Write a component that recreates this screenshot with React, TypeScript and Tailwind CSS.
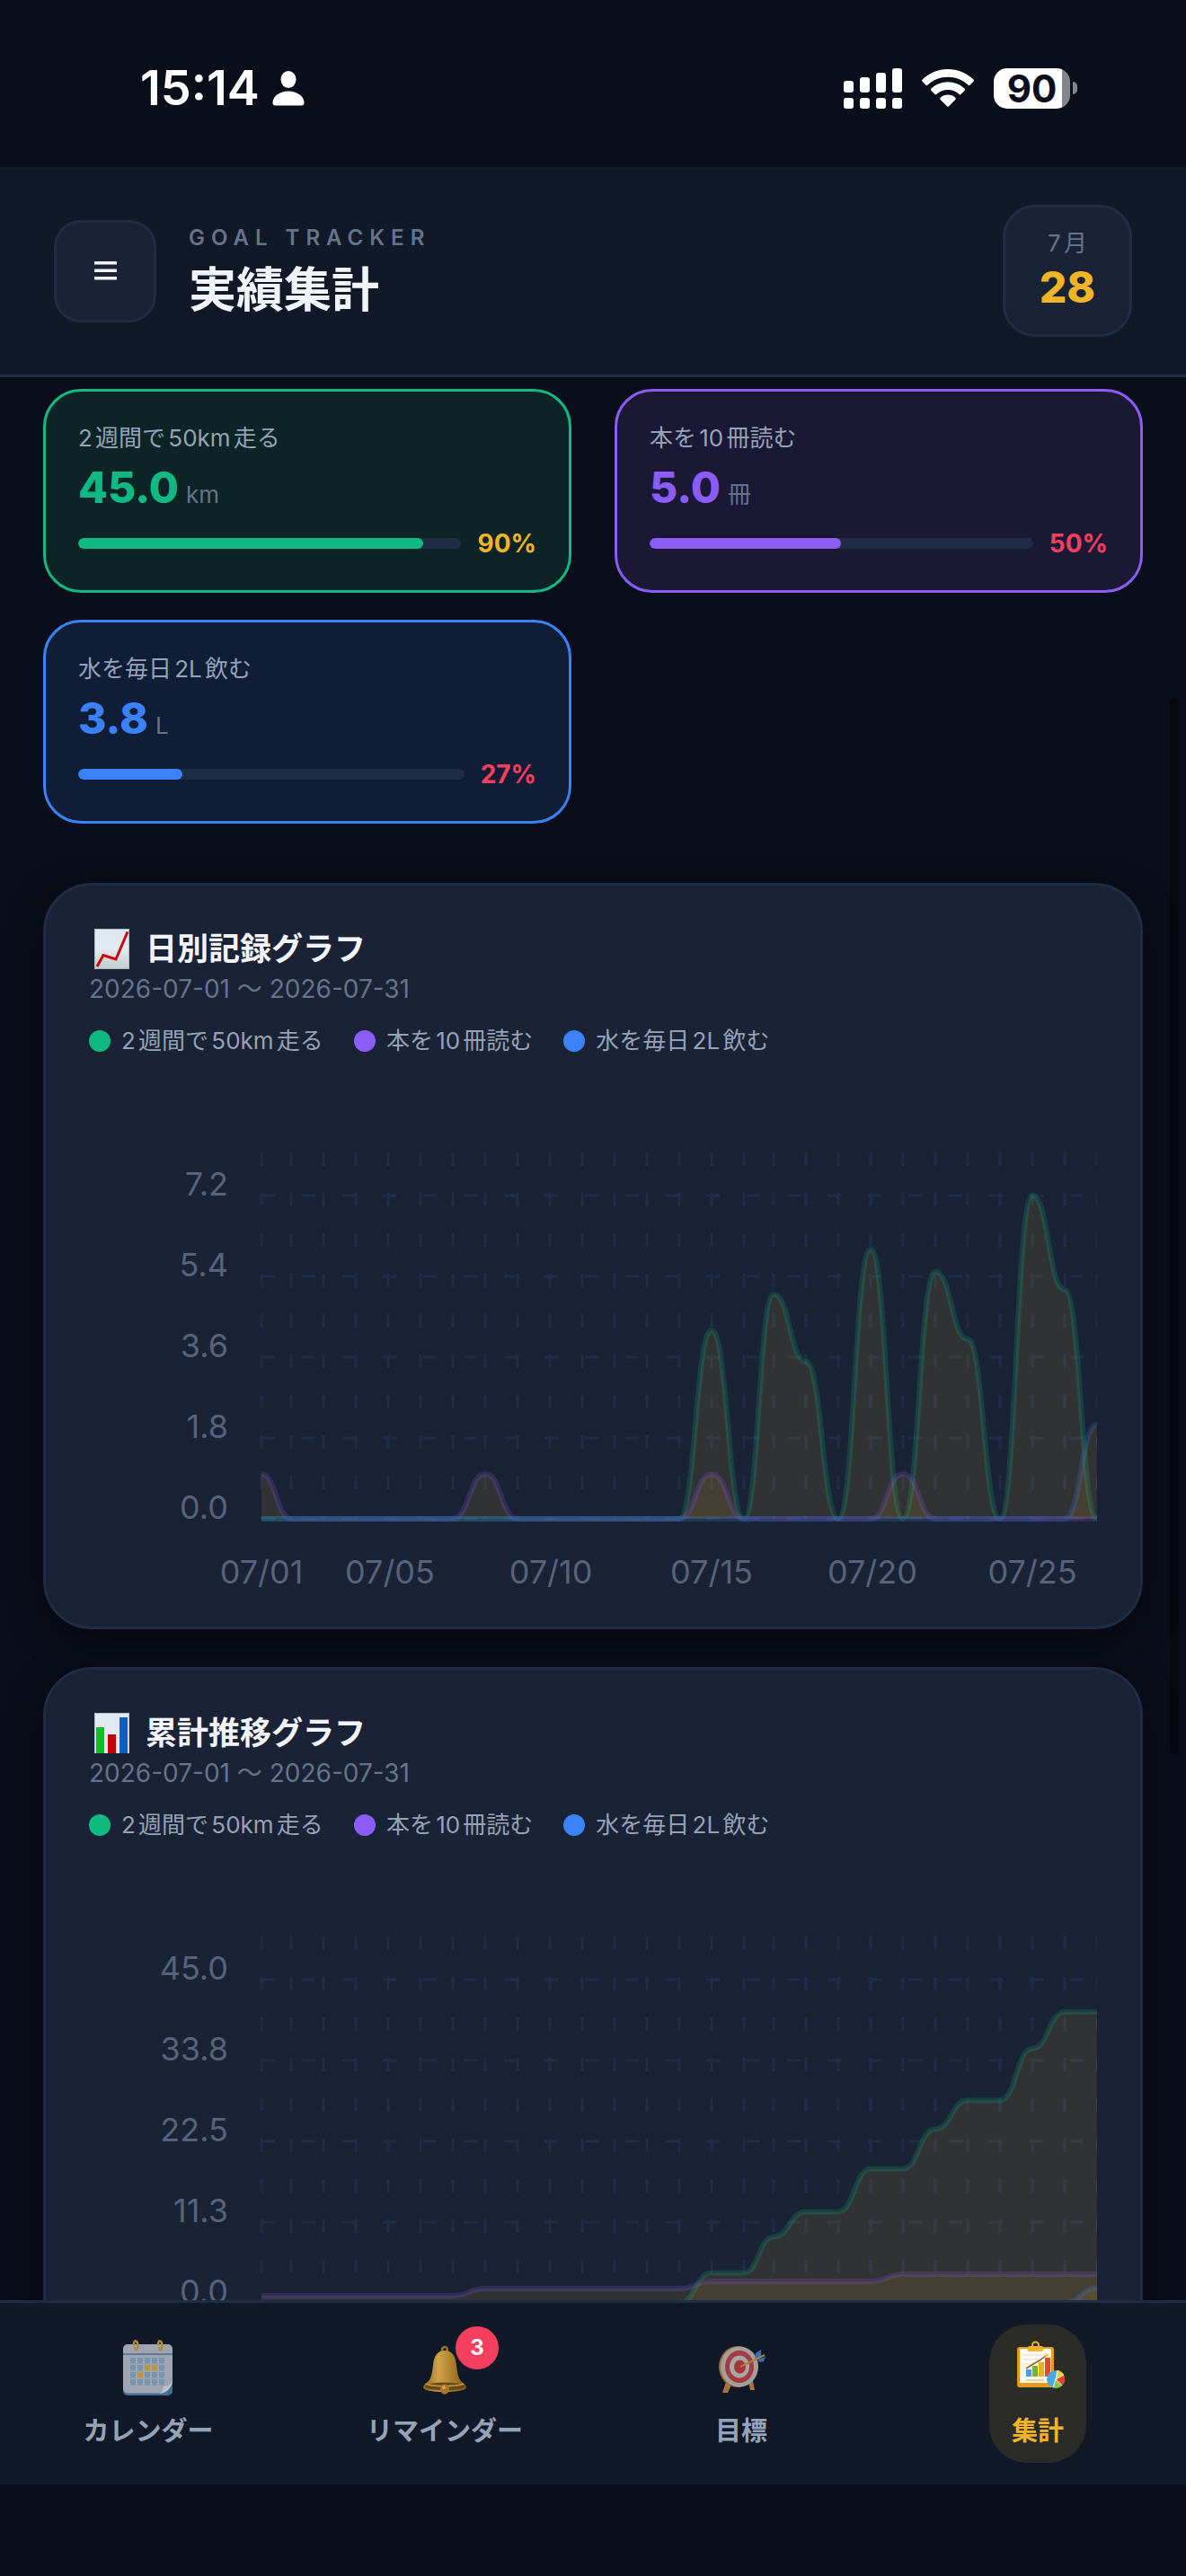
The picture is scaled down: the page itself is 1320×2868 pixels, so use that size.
import { ReactNode, useState } from "react";
import clsx from "clsx";

type Goal = {
  id: string;
  name: string;
  value: string;
  unit: string;
  percent: number;
  color: string;
  cardClass: string;
  valueClass: string;
  barClass: string;
  percentClass: string;
  /** 日別の記録（1日〜27日） */
  daily: number[];
};

const GOALS: Goal[] = [
  {
    id: "run",
    name: "2週間で50km走る",
    value: "45.0",
    unit: "km",
    percent: 90,
    color: "#10b981",
    cardClass: "border-[#10b981] bg-[#0d2427]",
    valueClass: "text-[#10b981]",
    barClass: "bg-[#10b981]",
    percentClass: "text-[#f0b429]",
    daily: [
      0, 0, 0, 0, 0, 0, 0, 0, 0, 0, 0, 0, 0, 0, 4.2, 0, 5, 3.5, 0, 6, 0, 5.5, 4,
      0, 7.2, 5.1, 0,
    ],
  },
  {
    id: "read",
    name: "本を10冊読む",
    value: "5.0",
    unit: "冊",
    percent: 50,
    color: "#8b5cf6",
    cardClass: "border-[#8b5cf6] bg-[#1b1835]",
    valueClass: "text-[#8b5cf6]",
    barClass: "bg-[#8b5cf6]",
    percentClass: "text-[#f43f5e]",
    daily: [
      1, 0, 0, 0, 0, 0, 0, 1, 0, 0, 0, 0, 0, 0, 1, 0, 0, 0, 0, 0, 1, 0, 0, 0, 0,
      0, 0,
    ],
  },
  {
    id: "water",
    name: "水を毎日2L飲む",
    value: "3.8",
    unit: "L",
    percent: 27,
    color: "#3b82f6",
    cardClass: "border-[#3b82f6] bg-[#0f1d36]",
    valueClass: "text-[#3b82f6]",
    barClass: "bg-[#3b82f6]",
    percentClass: "text-[#f43f5e]",
    daily: [
      0, 0, 0, 0, 0, 0, 0, 0, 0, 0, 0, 0, 0, 0, 0, 0, 0, 0, 0, 0, 0, 0, 0, 0, 0,
      0, 2.1,
    ],
  },
];

const PERIOD = "2026-07-01 〜 2026-07-31";

/** 累計に変換 */
const accumulate = (values: number[]) => {
  let sum = 0;
  return values.map((value) => (sum += value));
};

// グラフの座標
const CHART_WIDTH = 1122;
const CHART_HEIGHT = 564;
const PLOT_LEFT = 192;
const PLOT_TOP = 72;
const PLOT_BOTTOM = 480;
const ROW_HEIGHT = 90;
const DAYS = 27;
const LABEL_DAYS = [1, 5, 10, 15, 20, 25];

/** 日付のx座標（グリッドに合わせて3px単位に丸める） */
const dayX = (index: number) => Math.floor(64.06 + index * 11.93) * 3;

/** ラベルは丸めずに等間隔で置く */
const labelX = (index: number) =>
  Math.round(PLOT_LEFT + (index * (CHART_WIDTH - PLOT_LEFT)) / (DAYS - 1));

const linePath = (values: number[], max: number) => {
  const toY = (value: number) => PLOT_BOTTOM - (value / max) * ROW_HEIGHT * 4;
  return values.reduce((path, value, i) => {
    const x = dayX(i);
    const y = toY(value);
    if (i === 0) return `M${x} ${y}`;
    const middle = (dayX(i - 1) + x) / 2;
    return `${path} C${middle} ${toY(values[i - 1])} ${middle} ${y} ${x} ${y}`;
  }, "");
};

type TrendChartProps = {
  id: string;
  label: string;
  max: number;
  ticks: string[];
  series: { color: string; values: number[] }[];
};

function TrendChart({ id, label, max, ticks, series }: TrendChartProps) {
  const clipId = `plot-${id}`;

  return (
    <svg
      viewBox={`0 0 ${CHART_WIDTH} ${CHART_HEIGHT}`}
      className="mt-9 block w-full"
      role="img"
      aria-label={label}
    >
      <clipPath id={clipId}>
        <rect x={PLOT_LEFT} y="0" width={CHART_WIDTH} height="490" />
      </clipPath>

      {/* グリッド */}
      <g stroke="#1e2d4a" strokeWidth="3" strokeDasharray="15 30">
        {Array.from({ length: DAYS }, (_, i) => (
          <line
            key={i}
            x1={dayX(i)}
            x2={dayX(i)}
            y1={PLOT_TOP}
            y2={PLOT_BOTTOM}
          />
        ))}
        {ticks.map((tick, i) => (
          <line
            key={tick}
            x1={PLOT_LEFT}
            x2={CHART_WIDTH}
            y1={PLOT_BOTTOM - (4 - i) * ROW_HEIGHT}
            y2={PLOT_BOTTOM - (4 - i) * ROW_HEIGHT}
          />
        ))}
      </g>

      {/* 折れ線と塗り */}
      <g clipPath={`url(#${clipId})`}>
        {series.map(({ color, values }) => {
          const path = linePath(values, max);
          return (
            <g key={color}>
              <path
                d={`${path} V${PLOT_BOTTOM} H${PLOT_LEFT} Z`}
                fill="#f0b429"
                fillOpacity="0.11"
              />
              <path
                d={path}
                fill="none"
                stroke={color}
                strokeOpacity="0.2"
                strokeWidth="6"
              />
            </g>
          );
        })}
      </g>

      {/* 目盛り */}
      <g fill="#55637b" fontSize="36">
        {ticks.map((tick, i) => (
          <text
            key={tick}
            x="155"
            y={PLOT_BOTTOM - (4 - i) * ROW_HEIGHT}
            textAnchor="end"
          >
            {tick}
          </text>
        ))}
        {LABEL_DAYS.map((day) => (
          <text key={day} x={labelX(day - 1)} y="552" textAnchor="middle">
            {`07/${String(day).padStart(2, "0")}`}
          </text>
        ))}
      </g>
    </svg>
  );
}

type ChartCardProps = {
  icon: ReactNode;
  title: string;
  children: ReactNode;
};

function ChartCard({ icon, title, children }: ChartCardProps) {
  return (
    <section className="rounded-[54px] border-3 border-[#1e2d45] bg-[#1a2235] px-12 pt-12 pb-9 shadow-[0_12px_36px_rgba(0,0,0,0.5)]">
      <div className="flex items-center gap-4 pl-1.5">
        {icon}
        <h2 className="text-[35px] leading-[45px] font-bold text-slate-100">
          {title}
        </h2>
      </div>
      <p className="mt-1.5 text-[28px] leading-8 text-[#64748b]">{PERIOD}</p>
      <ul className="mt-[26px] flex flex-wrap gap-x-[34px]">
        {GOALS.map((goal) => (
          <li key={goal.id} className="flex items-center gap-3">
            <span className={clsx("size-6 rounded-full", goal.barClass)} />
            <span className="text-[26px] leading-8 text-[#94a3b8]">
              {goal.name}
            </span>
          </li>
        ))}
      </ul>
      {children}
    </section>
  );
}

function GoalCard({ goal }: { goal: Goal }) {
  return (
    <article className={clsx("rounded-[42px] border-3 p-9", goal.cardClass)}>
      <h2 className="text-[26px] leading-8 text-[#94a3b8]">{goal.name}</h2>
      <p className="mt-2.5 flex items-baseline gap-2">
        <span
          className={clsx("text-5xl/[57px] font-extrabold", goal.valueClass)}
        >
          {goal.value}
        </span>
        <span className="text-[26px] leading-8 text-[#64748b]">
          {goal.unit}
        </span>
      </p>
      <div className="mt-[18px] flex items-center gap-[18px]">
        <div className="h-3 flex-1 overflow-hidden rounded-full bg-[#1e2d45]">
          <div
            className={clsx("h-full rounded-full", goal.barClass)}
            style={{ width: `${goal.percent}%` }}
          />
        </div>
        <span
          className={clsx("text-[28px] leading-8 font-bold", goal.percentClass)}
        >
          {goal.percent}%
        </span>
      </div>
    </article>
  );
}

function StatusBar() {
  return (
    <div className="flex h-[186px] shrink-0 items-center justify-between pt-2.5 pr-[121px] pl-[156px] text-white">
      <div className="flex items-center gap-3.5">
        <span className="text-[54px] leading-[60px] font-semibold">15:14</span>
        <svg width="36" height="39" viewBox="0 0 36 39" fill="currentColor">
          <ellipse cx="18" cy="9.5" rx="8.5" ry="9.5" />
          <path d="M18 22.5c9.5 0 17.5 5.500 17.5 13 0 2-1 3-3 3h-29c-2 0-3-1-3-3 0-7.500 8-13 17.500-13z" />
        </svg>
      </div>
      <div className="flex items-center gap-[22px]">
        <svg width="65" height="45" viewBox="0 0 65 45" fill="currentColor">
          <rect x="0" y="14" width="11" height="13" rx="3" />
          <rect x="18" y="10" width="11" height="17" rx="3" />
          <rect x="36" y="5" width="11" height="22" rx="3" />
          <rect x="54" y="0" width="11" height="27" rx="3" />
          <rect x="0" y="33" width="11" height="12" rx="3" />
          <rect x="18" y="33" width="11" height="12" rx="3" />
          <rect x="36" y="33" width="11" height="12" rx="3" />
          <rect x="54" y="33" width="11" height="12" rx="3" />
        </svg>
        <svg width="58" height="42" viewBox="0 0 58 42" fill="currentColor">
          <path d="M29 0C18 0 8 4.300.6 11.500c-.8.8-.8 1.500 0 2.300l3.700 3.800c.8.8 1.500.8 2.300 0C12.600 12 20.400 8.800 29 8.800S45.400 12 51.400 17.600c.8.8 1.500.8 2.300 0l3.700-3.800c.8-.8.8-1.500 0-2.300C50 4.300 40 0 29 0z" />
          <path d="M29 14.200c-7.200 0-13.700 2.800-18.500 7.400-.8.800-.8 1.500 0 2.300l3.800 3.900c.8.800 1.500.8 2.300 0 3.300-3 7.600-4.900 12.400-4.900s9.100 1.900 12.400 4.900c.8.800 1.500.8 2.300 0l3.800-3.900c.8-.8.8-1.500 0-2.300-4.800-4.600-11.300-7.400-18.500-7.400z" />
          <path d="M29 28.500c-3.200 0-6.100 1.200-8.200 3.200-.8.8-.8 1.400 0 2.200l7.100 7.300c.8.800 1.400.8 2.200 0l7.100-7.300c.8-.8.8-1.400 0-2.200-2.100-2-5-3.200-8.200-3.200z" />
        </svg>
        <div className="flex items-center gap-[3px]">
          <span className="flex h-[45px] w-[85px] items-center justify-center rounded-[15px] bg-linear-to-r from-white from-90% to-[#85868c] to-90% text-[42px] leading-[45px] font-bold text-[#0a0e1a]">
            90
          </span>
          <span className="h-3.5 w-[5px] rounded-r-full bg-[#85868c]" />
        </div>
      </div>
    </div>
  );
}

function ChartUpIcon() {
  return (
    <svg className="mr-0.5 shrink-0" width="39" height="45" viewBox="0 0 39 45">
      <defs>
        <linearGradient id="paper" x1="0" y1="0" x2="0" y2="1">
          <stop offset="0" stopColor="#dbe7f0" />
          <stop offset="0.5" stopColor="#e3ebf1" />
          <stop offset="1" stopColor="#c3cad0" />
        </linearGradient>
      </defs>
      <rect width="39" height="45" fill="#aeb8c2" />
      <rect x="1" y="1" width="37" height="43" fill="url(#paper)" />
      <path
        d="M3 42 10 29.5 24 34 37 3.5"
        fill="none"
        stroke="#c8070b"
        strokeWidth="3"
      />
    </svg>
  );
}

function BarChartIcon() {
  return (
    <svg className="mr-0.5 shrink-0" width="39" height="45" viewBox="0 0 39 45">
      <rect width="39" height="45" fill="#b4bec8" />
      <rect x="1" y="1" width="37" height="44" fill="#e1eaf2" />
      <rect x="2" y="16" width="9" height="29" fill="#08c41c" />
      <rect x="15" y="24" width="9" height="21" fill="#c40508" />
      <rect x="28" y="5" width="9" height="40" fill="#0a5fcb" />
    </svg>
  );
}

function CalendarIcon() {
  return (
    <svg width="60" height="62" viewBox="-2 0 60 62">
      <rect x="0" y="8" width="55" height="54" rx="5" fill="#436f99" />
      <path
        d="M5 5h45a5 5 0 0 1 5 5v36c-2 9-7 13-14 13.500H5a5 5 0 0 1-5-5V10a5 5 0 0 1 5-5z"
        fill="#a0a4b0"
      />
      <path d="M0 16h55" stroke="#4a6f93" strokeWidth="1.500" />
      {[0, 1, 2, 3].map((row) =>
        [0, 1, 2, 3, 4].map((col) => {
          const marked =
            (row === 1 && (col === 2 || col === 3)) || (row === 2 && col === 1);
          return (
            <rect
              key={`${row}-${col}`}
              x={8 + col * 8}
              y={20 + row * 8}
              width="6"
              height="6.500"
              fill={marked ? "#b8943c" : "#7795ae"}
            />
          );
        }),
      )}
      <path
        d="M55 45c-1 9-6 14-15 15 4-2 5-6 5-8 4 0 8-2 10-7z"
        fill="#c0c3c9"
      />
      <g fill="none" stroke="#b08b38" strokeWidth="2.500" strokeLinecap="round">
        <path d="M12 5c0-5 4-5 4.500 1 0 6-3 7-3 3" />
        <path d="M39 5c0-5 4-5 4.500 1 0 6-3 7-3 3" />
      </g>
    </svg>
  );
}

function BellIcon() {
  return (
    <svg width="60" height="60" viewBox="-6 -6 60 60">
      <defs>
        <linearGradient id="bell" x1="0" y1="0" x2="1" y2="0">
          <stop offset="0" stopColor="#8a6524" />
          <stop offset="0.35" stopColor="#cfa348" />
          <stop offset="0.6" stopColor="#b58831" />
          <stop offset="1" stopColor="#7c5718" />
        </linearGradient>
      </defs>
      <circle cx="24" cy="4" r="3" fill="none" stroke="#9b7128" strokeWidth="2.500" />
      <path
        d="M24 5c8 0 12 6 13 16 1 9 2 15 6 19 3 2 5 4 5 6 0 3-10 5-24 5S0 49 0 46c0-2 2-4 5-6 4-4 5-10 6-19C12 11 16 5 24 5z"
        fill="url(#bell)"
      />
      <ellipse cx="24" cy="45" rx="22" ry="4.500" fill="#6b4a17" />
      <path
        d="M3 42c9 3.500 33 3.500 42 0"
        fill="none"
        stroke="#c99a3c"
        strokeWidth="1.500"
      />
      <ellipse cx="24" cy="48" rx="5" ry="5.500" fill="#a87926" />
      <ellipse cx="23" cy="46" rx="2" ry="2" fill="#d0a752" />
    </svg>
  );
}

function TargetIcon() {
  return (
    <svg width="60" height="60" viewBox="-5 -6 60 60">
      <path d="M8 40 4 52h6l4-9zM33 40l2 9h5l-2-10z" fill="#a87240" />
      <ellipse cx="21" cy="23" rx="21" ry="23" fill="#96693a" />
      <ellipse cx="23" cy="23" rx="21" ry="22.500" fill="#a3a09c" />
      <ellipse cx="23" cy="23" rx="16" ry="18" fill="#a33c42" />
      <ellipse cx="23" cy="23" rx="11" ry="12.500" fill="#aaa7a4" />
      <ellipse cx="23.500" cy="23" rx="6.500" ry="7.500" fill="#a3363c" />
      <path d="m40 14 1-6 6-4v8zM43 15l9-3-2 5-5 1z" fill="#3f6cab" />
      <path d="M24 23 51 10" stroke="#a8803d" strokeWidth="2" />
    </svg>
  );
}

function ReportIcon() {
  return (
    <svg width="60" height="60" viewBox="-7 -1 60 60">
      <circle cx="20.500" cy="4" r="3.500" fill="none" stroke="#f2b62c" strokeWidth="2" />
      <rect x="0" y="6" width="41" height="45" rx="3" fill="#e39a1a" />
      <rect x="3" y="8" width="35" height="38" rx="1" fill="#fffaf0" />
      <rect x="12" y="5" width="17" height="6" rx="1.500" fill="#f4b52c" />
      <path d="M7 15h22M7 20h18M7 25h12" stroke="#d8dde2" />
      <rect x="10" y="31" width="6" height="8" fill="#3fa2e8" />
      <rect x="17" y="27" width="6" height="12" fill="#74b62e" />
      <rect x="24" y="23" width="6" height="16" fill="#f0ad1c" />
      <rect x="31" y="18" width="6" height="21" fill="#df4a2b" />
      <path d="m10 30 8-5 7-4 8-6" fill="none" stroke="#8c6418" strokeWidth="1.500" />
      <circle cx="33" cy="15" r="2" fill="#ffcf3f" />
      <path d="M10 43h20" stroke="#f3c66a" strokeWidth="1.500" />
      <circle cx="43" cy="42" r="10" fill="#45a7ec" />
      <path d="m43 42 2-10a10 10 0 0 1 7 5z" fill="#f5cf2f" />
      <path d="m43 42 9-5a10 10 0 0 1-2 12z" fill="#e2452c" />
      <path d="m43 42 7 7a10 10 0 0 1-10 2z" fill="#8cc63c" />
      <path d="m43 42 2-10M43 42l9-5M43 42l7 7M43 42l-3 9" stroke="#fff" />
    </svg>
  );
}

const NAV_ITEMS = [
  { id: "calendar", label: "カレンダー", icon: <CalendarIcon /> },
  { id: "reminder", label: "リマインダー", icon: <BellIcon />, badge: 3 },
  { id: "goal", label: "目標", icon: <TargetIcon /> },
  { id: "stats", label: "集計", icon: <ReportIcon /> },
];

export default function App() {
  const [activeTab, setActiveTab] = useState("stats");

  return (
    <div
      lang="ja"
      className="flex h-screen flex-col bg-[#0a0e1a] font-['Inter','Noto_Sans_CJK_JP',sans-serif] [text-autospace:normal]"
    >
      <StatusBar />

      {/* ヘッダー */}
      <header className="flex shrink-0 items-center border-b-3 border-[#1e2d45] bg-[#111827] px-[60px] py-[42px]">
        <button
          type="button"
          aria-label="メニュー"
          className="flex size-[114px] items-center justify-center rounded-[30px] border-3 border-[#1e2d45] bg-[#1a2235]"
        >
          <svg width="25" height="21" viewBox="0 0 25 21" fill="#f1f5f9">
            <rect y="0" width="25" height="3.500" />
            <rect y="8.500" width="25" height="3.500" />
            <rect y="17" width="25" height="3.500" />
          </svg>
        </button>
        <div className="ml-9">
          <p className="text-2xl/8 font-semibold tracking-[7px] text-[#64748b]">
            GOAL TRACKER
          </p>
          <h1 className="mt-2.5 text-[53px] leading-[64px] font-bold text-slate-100">
            実績集計
          </h1>
        </div>
        <div className="ml-auto flex w-36 flex-col items-center gap-1 rounded-[36px] border-3 border-[#1e2d45] bg-[#1a2235] py-6">
          <span className="text-[26px] leading-8 text-[#64748b]">7月</span>
          <span className="text-5xl/[57px] font-extrabold text-[#f0b429]">
            28
          </span>
        </div>
      </header>

      <div className="relative min-h-0 flex-1">
        <main className="h-full overflow-y-auto px-12 pt-[13px] pb-12 [scrollbar-width:none]">
          {/* 目標ごとの達成状況 */}
          <div className="grid grid-cols-2 gap-x-12 gap-y-[30px]">
            {GOALS.map((goal) => (
              <GoalCard key={goal.id} goal={goal} />
            ))}
          </div>

          <div className="mt-[66px] flex flex-col gap-[42px]">
            <ChartCard icon={<ChartUpIcon />} title="日別記録グラフ">
              <TrendChart
                id="daily"
                label="日別記録グラフ"
                max={7.2}
                ticks={["7.2", "5.4", "3.6", "1.8", "0.0"]}
                series={GOALS.map(({ color, daily }) => ({
                  color,
                  values: daily,
                }))}
              />
            </ChartCard>
            <ChartCard icon={<BarChartIcon />} title="累計推移グラフ">
              <TrendChart
                id="total"
                label="累計推移グラフ"
                max={45}
                ticks={["45.0", "33.8", "22.5", "11.3", "0.0"]}
                series={GOALS.map(({ color, daily }) => ({
                  color,
                  values: accumulate(daily),
                }))}
              />
            </ChartCard>
          </div>
        </main>

        {/* スクロール位置 */}
        <div className="pointer-events-none absolute top-1/6 right-2 h-[55%] w-2.5 rounded-full bg-black/35" />
      </div>

      {/* 下部ナビゲーション */}
      <nav className="mb-[102px] grid shrink-0 grid-cols-4 justify-items-center border-t-3 border-[#1e2d45] bg-[#111827] py-6">
        {NAV_ITEMS.map((item) => {
          const active = item.id === activeTab;
          return (
            <button
              key={item.id}
              type="button"
              aria-current={active ? "page" : undefined}
              onClick={() => setActiveTab(item.id)}
              className={clsx(
                "flex flex-col items-center gap-6 rounded-[42px] px-6 py-[18px]",
                active ? "bg-[#f0b429]/12 text-[#f0b429]" : "text-[#94a3b8]",
              )}
            >
              <span className="relative flex size-[60px] items-center justify-center">
                {item.icon}
                {item.badge && (
                  <span className="absolute -top-4 -right-[30px] flex size-12 items-center justify-center rounded-full bg-[#f43f5e] text-2xl font-bold text-white">
                    {item.badge}
                  </span>
                )}
              </span>
              <span className="text-[29px] leading-[34px] font-bold">
                {item.label}
              </span>
            </button>
          );
        })}
      </nav>
    </div>
  );
}
